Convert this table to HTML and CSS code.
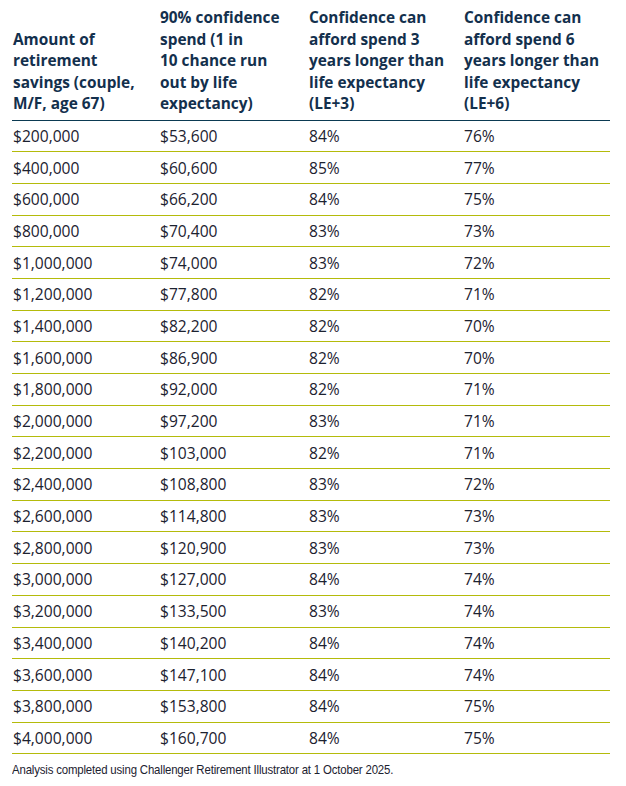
FILE: index.html
```html
<!DOCTYPE html>
<html>
<head>
<meta charset="utf-8">
<link rel="stylesheet" href="styles.css">
</head>
<body>
<div class="wrap">
<table class="tbl">
<colgroup><col class="c1"><col class="c2"><col class="c3"><col class="c4"></colgroup>
<thead>
<tr>
<th>Amount of<br>retirement<br>savings (couple,<br>M/F, age 67)</th>
<th>90% confidence<br>spend (1 in<br>10 chance run<br>out by life<br>expectancy)</th>
<th>Confidence can<br>afford spend 3<br>years longer than<br>life expectancy<br>(LE+3)</th>
<th>Confidence can<br>afford spend 6<br>years longer than<br>life expectancy<br>(LE+6)</th>
</tr>
</thead>
<tbody>
<tr><td>$200,000</td><td>$53,600</td><td>84%</td><td>76%</td></tr>
<tr><td>$400,000</td><td>$60,600</td><td>85%</td><td>77%</td></tr>
<tr><td>$600,000</td><td>$66,200</td><td>84%</td><td>75%</td></tr>
<tr><td>$800,000</td><td>$70,400</td><td>83%</td><td>73%</td></tr>
<tr><td>$1,000,000</td><td>$74,000</td><td>83%</td><td>72%</td></tr>
<tr><td>$1,200,000</td><td>$77,800</td><td>82%</td><td>71%</td></tr>
<tr><td>$1,400,000</td><td>$82,200</td><td>82%</td><td>70%</td></tr>
<tr><td>$1,600,000</td><td>$86,900</td><td>82%</td><td>70%</td></tr>
<tr><td>$1,800,000</td><td>$92,000</td><td>82%</td><td>71%</td></tr>
<tr><td>$2,000,000</td><td>$97,200</td><td>83%</td><td>71%</td></tr>
<tr><td>$2,200,000</td><td>$103,000</td><td>82%</td><td>71%</td></tr>
<tr><td>$2,400,000</td><td>$108,800</td><td>83%</td><td>72%</td></tr>
<tr><td>$2,600,000</td><td>$114,800</td><td>83%</td><td>73%</td></tr>
<tr><td>$2,800,000</td><td>$120,900</td><td>83%</td><td>73%</td></tr>
<tr><td>$3,000,000</td><td>$127,000</td><td>84%</td><td>74%</td></tr>
<tr><td>$3,200,000</td><td>$133,500</td><td>83%</td><td>74%</td></tr>
<tr><td>$3,400,000</td><td>$140,200</td><td>84%</td><td>74%</td></tr>
<tr><td>$3,600,000</td><td>$147,100</td><td>84%</td><td>74%</td></tr>
<tr><td>$3,800,000</td><td>$153,800</td><td>84%</td><td>75%</td></tr>
<tr><td>$4,000,000</td><td>$160,700</td><td>84%</td><td>75%</td></tr>
</tbody>
</table>
<p class="note">Analysis completed using Challenger Retirement Illustrator at 1 October 2025.</p>
</div>
</body>
</html>
```

FILE: styles.css
```css
html, body {
  margin: 0;
  padding: 0;
  background: #ffffff;
}
.wrap {
  padding: 7px 16px 0 12px;
  font-family: "Open Sans", "Noto Sans", sans-serif;
}
.tbl {
  width: 598px;
  border-collapse: collapse;
  table-layout: fixed;
}
.c1 { width: 147px; }
.c2 { width: 149px; }
.c3 { width: 155px; }
.c4 { width: 147px; }
.tbl th {
  text-align: left;
  vertical-align: bottom;
  font-weight: 700;
  font-size: 15.4px;
  line-height: 21.5px;
  color: #13304d;
  padding: 0 0 5px 1px;
  border-bottom: 1.5px solid #0b3a52;
  white-space: nowrap;
}
.tbl td {
  font-size: 15.6px;
  line-height: 20px;
  color: #1c2230;
  padding: 5.35px 4px 5.35px 1px;
  border-bottom: 1px solid #b4bb0b;
  white-space: nowrap;
}
.note {
  display: inline-block;
  margin: 7px 0 0 0;
  font-family: "Liberation Sans", Arial, sans-serif;
  font-size: 13.6px;
  letter-spacing: -0.2px;
  line-height: 17px;
  color: #1c2230;
  white-space: nowrap;
  transform: scaleX(0.84);
  transform-origin: left center;
}
```
